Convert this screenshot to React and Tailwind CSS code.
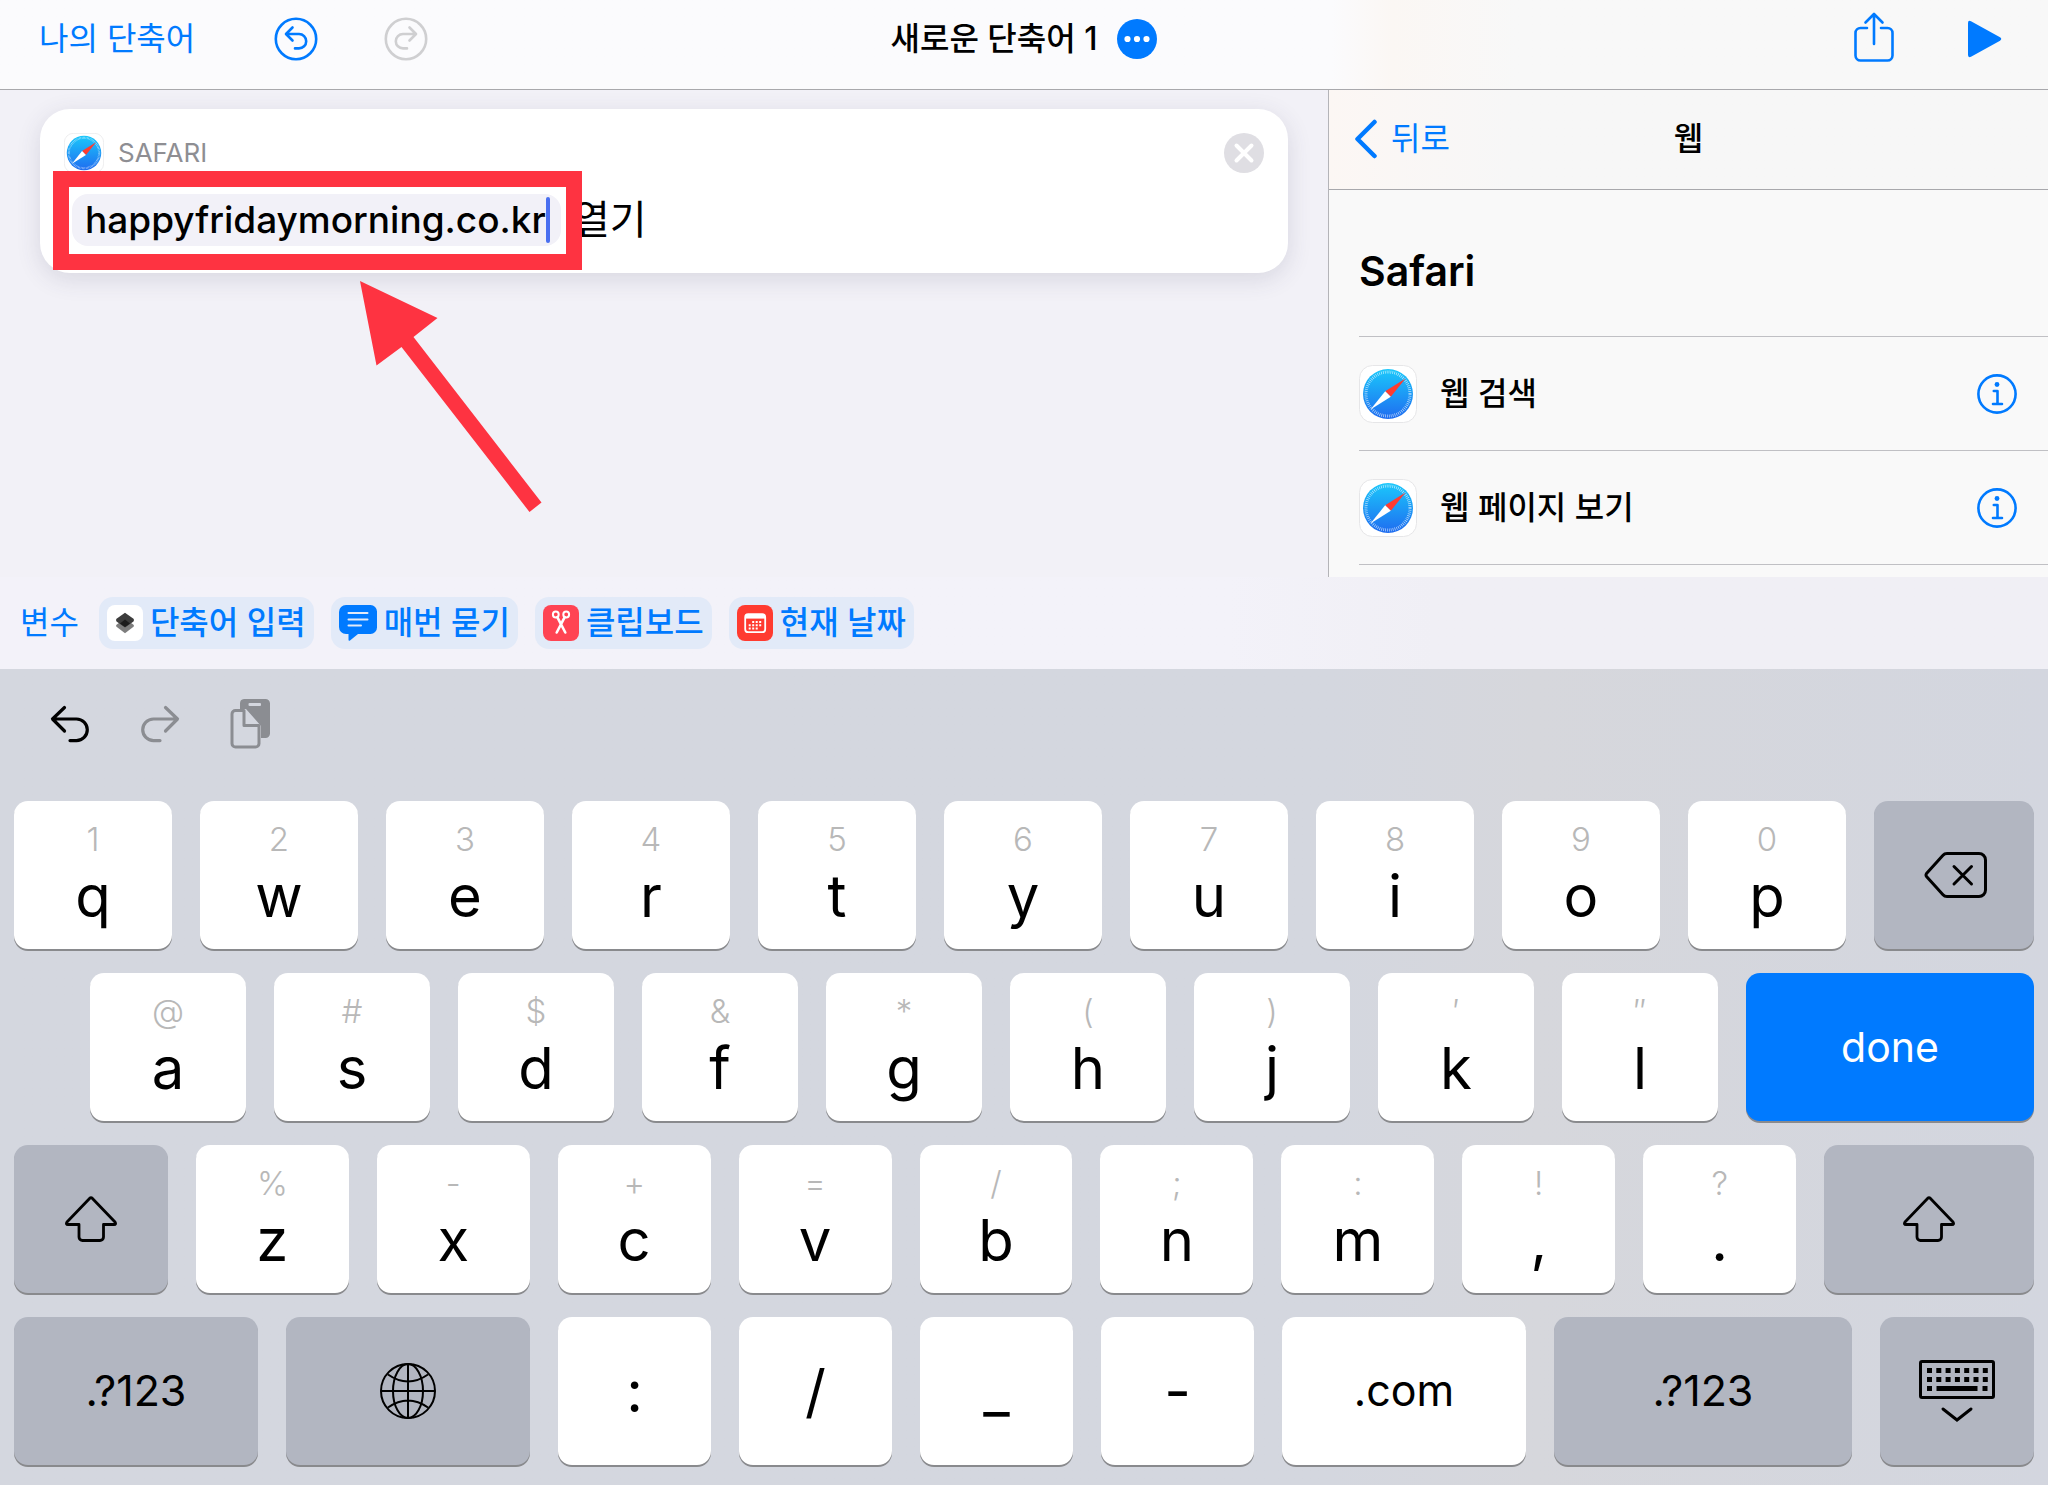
import { useId } from "react";
import { clsx } from "clsx";

const row1 = [
    ["q", "1"], ["w", "2"], ["e", "3"], ["r", "4"], ["t", "5"],
    ["y", "6"], ["u", "7"], ["i", "8"], ["o", "9"], ["p", "0"],
];
const row2 = [
    ["a", "@"], ["s", "#"], ["d", "$"], ["f", "&"], ["g", "*"],
    ["h", "("], ["j", ")"], ["k", "′"], ["l", "″"],
];
const row3 = [
    ["z", "%"], ["x", "-"], ["c", "+"], ["v", "="], ["b", "/"],
    ["n", ";"], ["m", ":"], [",", "!"], [".", "?"],
];
const row4 = [":", "/", "_", "-"];

const actions = ["웹 검색", "웹 페이지 보기"];

function SafariIcon({ className }) {
    const id = useId();
    return (
        <svg viewBox="0 0 58 58" className={className} aria-hidden="true">
            <defs>
                <linearGradient id={id} x1="0" y1="0" x2="0" y2="1">
                    <stop offset="0" stopColor="#1bc8fb" />
                    <stop offset="1" stopColor="#1f6cf0" />
                </linearGradient>
            </defs>
            <rect x="0.5" y="0.5" width="57" height="57" rx="13" fill="#fff" stroke="#e6e6e8" />
            <circle cx="29" cy="29" r="25" fill={`url(#${id})`} />
            <circle cx="29" cy="29" r="22" fill="none" stroke="#fff" strokeOpacity="0.7" strokeWidth="3" strokeDasharray="0.7 1.22" />
            <path d="M46.500 13.500 26.200 26.200l5.600 5.600z" fill="#ff3b30" />
            <path d="M11.500 44.500 26.200 26.200l5.600 5.600z" fill="#fff" />
        </svg>
    );
}

function UndoCircle({ flip }) {
    return (
        <svg viewBox="0 0 44 44" className={clsx("size-11", flip && "-scale-x-100")} fill="none" stroke="currentColor" strokeWidth="2.6" strokeLinecap="round" strokeLinejoin="round" aria-hidden="true">
            <circle cx="22" cy="22" r="20.2" />
            <path d="M18.500 10.500 12 17l6.500 6.500M12.500 17H25a7.200 7.200 0 0 1 0 14.400h-4" />
        </svg>
    );
}

function UndoArrow({ flip }) {
    return (
        <svg viewBox="0 0 40 38" className={clsx("h-[38px] w-10", flip && "-scale-x-100")} fill="none" stroke="currentColor" strokeWidth="3.2" strokeLinecap="round" strokeLinejoin="round" aria-hidden="true">
            <path d="M14.500 2.500 2.500 14l12 12M3 14h23.500a10.800 10.800 0 0 1 0 21.600H20" />
        </svg>
    );
}

function PasteIcon() {
    return (
        <svg viewBox="0 0 40 50" className="h-[50px] w-10" aria-hidden="true">
            <path d="M14 0h21.500A4.500 4.500 0 0 1 40 4.500v30a4.500 4.500 0 0 1-4.500 4.500H31V27L16 10h-6V4.500A4.500 4.500 0 0 1 14 0z" fill="#8b8d92" />
            <rect x="18.5" y="4" width="12.5" height="3" rx="1" fill="#d4d7df" />
            <path d="M5.500 11.500H14L29 27v17.500a3.500 3.500 0 0 1-3.500 3.500h-20A3.500 3.500 0 0 1 2 44.500V15a3.500 3.500 0 0 1 3.500-3.500z" fill="#d4d7df" />
            <path d="M14 11.500H5.500A3.500 3.500 0 0 0 2 15v29.500A3.500 3.500 0 0 0 5.500 48h20a3.500 3.500 0 0 0 3.500-3.500V26.500H14z" fill="none" stroke="#8b8d92" strokeWidth="3" strokeLinejoin="round" />
        </svg>
    );
}

function ShareIcon() {
    return (
        <svg viewBox="0 0 40 50" className="h-[50px] w-10" fill="none" stroke="currentColor" strokeWidth="2.6" strokeLinecap="round" strokeLinejoin="round" aria-hidden="true">
            <path d="M13 16H6.500A5 5 0 0 0 1.500 21v22.500a5 5 0 0 0 5 5h27a5 5 0 0 0 5-5V21a5 5 0 0 0-5-5H27" />
            <path d="M20 32V2.500M11.500 10.500 20 2l8.500 8.500" />
        </svg>
    );
}

function InfoIcon() {
    return (
        <svg viewBox="0 0 40 40" className="size-10" fill="none" stroke="currentColor" strokeWidth="2.6" strokeLinecap="round" strokeLinejoin="round" aria-hidden="true">
            <circle cx="20" cy="20" r="18.6" />
            <circle cx="20" cy="10.5" r="2.4" fill="currentColor" stroke="none" />
            <path d="M16.800 17h3.700v13M16 30h9" />
        </svg>
    );
}

function ShortcutsGlyph() {
    return (
        <svg viewBox="0 0 36 36" className="size-9" aria-hidden="true">
            <rect width="36" height="36" rx="8" fill="#fff" />
            <path d="M18 13.500 26.500 19.800q1 1 0 2L18 28.200l-8.500-6.400q-1-1 0-2z" fill="#7d7d7d" />
            <path d="M18 7.800 26.500 13.800q1 1 0 2.600L18 22.500l-8.500-6.100q-1-1.600 0-2.600z" fill="#3c3c3c" />
            <path d="M18 14.500 23 18.500 18 22 13 18.500z" fill="#1c1c1c" />
        </svg>
    );
}

function AskGlyph() {
    return (
        <svg viewBox="0 0 38 36" className="h-9 w-[38px]" aria-hidden="true">
            <path d="M7 0h24.500A6.500 6.500 0 0 1 38 6.500v16a6.500 6.500 0 0 1-6.500 6.500H19l-8 6.500q-1.500 1-1.500-1V29H7a7 7 0 0 1-7-7V7a7 7 0 0 1 7-7z" fill="#007aff" />
            <path d="M9.500 8h19M9.500 14.500h19M9.500 20.500H22" stroke="#e2eaf8" strokeWidth="2" strokeLinecap="round" />
        </svg>
    );
}

function ClipboardGlyph() {
    return (
        <svg viewBox="0 0 36 36" className="size-9" fill="none" stroke="#fff" aria-hidden="true">
            <rect width="36" height="36" rx="8" fill="#ff4453" stroke="none" />
            <circle cx="12.8" cy="9.5" r="2.9" strokeWidth="2" />
            <circle cx="23.2" cy="9.5" r="2.9" strokeWidth="2" />
            <path d="M14.300 12.200 22.300 27.500M21.700 12.200 13.700 27.500" strokeWidth="2.6" strokeLinecap="round" />
        </svg>
    );
}

function DateGlyph() {
    return (
        <svg viewBox="0 0 36 36" className="size-9" fill="none" stroke="#fff" aria-hidden="true">
            <rect width="36" height="36" rx="8" fill="#ff3b30" stroke="none" />
            <rect x="8.2" y="9.2" width="20" height="18" rx="3" strokeWidth="1.8" />
            <path d="M8.500 11.800h19.500" strokeWidth="3.6" />
            <path d="M15.200 17h9M11.700 20.200h12.500M11.700 23.400h9" strokeWidth="2" strokeDasharray="2 1.5" />
        </svg>
    );
}

function BackspaceIcon() {
    return (
        <svg viewBox="0 0 64 48" className="ml-1 h-12 w-16" fill="none" stroke="currentColor" strokeWidth="3" strokeLinecap="round" strokeLinejoin="round" aria-hidden="true">
            <path d="M23 2.500h32A6.500 6.500 0 0 1 61.500 9v30a6.500 6.500 0 0 1-6.500 6.500H23q-2.500 0-4-1.800L2.500 25.500q-1-1.500 0-3L19 4.300q1.500-1.800 4-1.800z" />
            <path d="M30 15.500 47.500 33M47.500 15.500 30 33" />
        </svg>
    );
}

function ShiftIcon() {
    return (
        <svg viewBox="0 0 52 46" className="h-[46px] w-[52px]" fill="none" stroke="currentColor" strokeWidth="2.8" strokeLinejoin="round" aria-hidden="true">
            <path d="M24.800 2.200q1.200-1 2.400 0L50 26q1.500 2.500-1 2.500H38.500V41a3.500 3.500 0 0 1-3.500 3.500H17.500A3.500 3.500 0 0 1 14 41V28.500H3Q.5 28.500 2 26z" />
        </svg>
    );
}

function GlobeIcon() {
    return (
        <svg viewBox="0 0 56 56" className="size-14" fill="none" stroke="currentColor" strokeWidth="2" aria-hidden="true">
            <circle cx="28" cy="28" r="27" />
            <ellipse cx="28" cy="28" rx="15" ry="27" />
            <path d="M28 1v54M1 28h54M8 11.500q20 14 40 0M8 44.500q20-14 40 0" />
        </svg>
    );
}

function HideKeyboardIcon() {
    return (
        <svg viewBox="0 0 76 62" className="h-[62px] w-[76px]" fill="none" stroke="currentColor" strokeWidth="3" aria-hidden="true">
            <rect x="1.5" y="1.5" width="73" height="36" rx="1.5" />
            <path d="M8 10.500h61M8 19.500h61" strokeWidth="5" strokeDasharray="5 4.3" />
            <path d="M8 28.500h5M17.500 28.500h41M63.500 28.500h5" strokeWidth="5" />
            <path d="M24 49 38 60 52 49" strokeLinecap="round" />
        </svg>
    );
}

function Key({ children, hint, tone = "light", label }) {
    return (
        <button
            aria-label={label}
            className={clsx(
                "flex h-[148px] min-w-0 flex-col items-center rounded-[14px] shadow-[0_2px_0_#898a8d]",
                tone === "light" && "bg-white text-black",
                tone === "dark" && "bg-[#b2b6c1] text-black",
                tone === "blue" && "bg-[#007aff] text-white",
                hint ? "gap-[7px] pt-[18px]" : "justify-center"
            )}
        >
            {hint && <span className="text-[33px] leading-10 font-light text-[#b8b8b8]">{hint}</span>}
            {children}
        </button>
    );
}

function Letter({ children }) {
    return <span className="text-[58px] leading-[60px]">{children}</span>;
}

function Word({ children }) {
    return <span className="pb-[3px] text-[43px] leading-[50px]">{children}</span>;
}

function Chip({ icon, children }) {
    return (
        <button className="flex h-[52px] items-center gap-[7px] rounded-[14px] bg-[#e2eaf8] px-2 text-[32px] leading-10 font-medium whitespace-nowrap">
            {icon}
            {children}
        </button>
    );
}

function Header() {
    return (
        <header className="grid h-[90px] grid-cols-[1fr_auto_1fr] items-center border-b border-[#a8a8ac] bg-linear-to-r from-[#fbfbfd] from-65% via-[#fbf7f4] via-68% to-[#f8f8f8] to-74% px-[39px] pb-[11px]">
            <div className="flex items-center text-[#007aff]">
                <a href="#shortcuts" className="w-[235px] text-[32px] leading-10">나의 단축어</a>
                <button aria-label="실행 취소" className="mr-[66px]"><UndoCircle /></button>
                <button aria-label="다시 실행" className="text-[#cfcfd1]"><UndoCircle flip /></button>
            </div>
            <div className="flex items-center gap-5">
                <h1 className="text-[32px] leading-10 font-medium">새로운 단축어 1</h1>
                <button aria-label="설정">
                    <svg viewBox="0 0 40 40" className="size-10" aria-hidden="true">
                        <circle cx="20" cy="20" r="20" fill="#007aff" />
                        <g fill="#fff">
                            <circle cx="10.5" cy="20" r="3.1" />
                            <circle cx="20" cy="20" r="3.1" />
                            <circle cx="29.5" cy="20" r="3.1" />
                        </g>
                    </svg>
                </button>
            </div>
            <div className="flex items-center justify-end gap-[74px] pr-[7px] text-[#007aff]">
                <button aria-label="공유" className="pb-1"><ShareIcon /></button>
                <button aria-label="실행">
                    <svg viewBox="0 0 34 38" className="h-[38px] w-[34px]" fill="currentColor" aria-hidden="true">
                        <path d="M0 3Q0 0 3 1.200L32 17.300q2.500 1.700 0 3.400L3 36.800Q0 38 0 35z" />
                    </svg>
                </button>
            </div>
        </header>
    );
}

function ActionCard() {
    return (
        <article className="relative h-[164px] rounded-[30px] bg-white pt-6 pr-6 pl-6 shadow-[0_6px_24px_rgba(60,60,90,0.14)]">
            <div className="flex h-10 items-center">
                <SafariIcon className="size-10" />
                <h2 className="ml-[14px] flex-1 text-[26px] leading-8 text-[#8e8e93]">SAFARI</h2>
                <button aria-label="동작 삭제">
                    <svg viewBox="0 0 40 40" className="size-10" aria-hidden="true">
                        <circle cx="20" cy="20" r="20" fill="#dfdee3" />
                        <path d="m12.500 12.500 15 15M27.500 12.500l-15 15" stroke="#fff" strokeWidth="4" strokeLinecap="round" />
                    </svg>
                </button>
            </div>
            <div className="mt-[21px] ml-2 flex h-[52px] items-center gap-3">
                <div className="relative h-[52px] w-[489px] rounded-2xl bg-[#f2f1f8]">
                    <input type="text" aria-label="URL" defaultValue="happyfridaymorning.co.kr" className="h-[52px] w-full bg-transparent pl-[13px] text-[37px] leading-[52px] font-medium outline-none" />
                    <span className="absolute top-[3px] right-[11px] h-[46px] w-1 rounded-full bg-[#4a6ff0]" />
                </div>
                <span className="text-[40px] leading-[54px]">열기</span>
            </div>

            {/* Highlight around the URL field */}
            <div className="pointer-events-none absolute top-[62px] left-[13px] h-[99px] w-[529px] border-16 border-[#fe3341]" />
            <svg viewBox="0 0 184 234" className="pointer-events-none absolute top-[171px] left-[319px] h-[234px] w-[184px]" aria-hidden="true">
                <path d="M1 1 78.500 38 54.500 57 182.500 222.500 170.500 232 42.500 67 17.500 85.500z" fill="#fe3341" />
            </svg>
        </article>
    );
}

function Sidebar() {
    return (
        <aside className="flex flex-col border-l border-[#b4b4b8] bg-[#f9f9f9]">
            <nav className="grid h-[100px] grid-cols-[1fr_auto_1fr] items-center border-b border-[#a8a8ac] bg-linear-to-r from-[#fcf7f4] to-[#f7f7f7] to-25% px-[25px] pb-px">
                <a href="#back" className="flex items-center gap-[13px] text-[32px] leading-10 text-[#007aff]">
                    <svg viewBox="0 0 24 40" className="h-10 w-6" fill="none" stroke="currentColor" strokeWidth="4.5" strokeLinecap="round" strokeLinejoin="round" aria-hidden="true">
                        <path d="M20.500 3 3.500 20l17 17" />
                    </svg>
                    뒤로
                </a>
                <h2 className="text-[32px] leading-10 font-medium">웹</h2>
            </nav>
            <div className="pl-[30px]">
                <h3 className="pt-14 pb-10 text-[41px] leading-[50px] font-semibold">Safari</h3>
                <ul className="border-b border-[#c0c0c4]">
                    {actions.map((name) => (
                        <li key={name} className="flex h-[114px] items-center border-t border-[#c0c0c4] pr-[31px]">
                            <SafariIcon className="size-[58px]" />
                            <span className="ml-[23px] flex-1 text-[32px] leading-10 font-medium">{name}</span>
                            <button aria-label={`${name} 정보`} className="text-[#007aff]"><InfoIcon /></button>
                        </li>
                    ))}
                </ul>
            </div>
        </aside>
    );
}

function Keyboard() {
    return (
        <section className="bg-linear-to-r from-[#d4d7df] from-65% via-[#d6d7dc] via-75% to-[#d3d6df] px-[14px] pb-5">
            <div className="flex h-[132px] items-center pb-[22px] pl-9">
                <button aria-label="실행 취소" className="mr-[50px]"><UndoArrow /></button>
                <button aria-label="다시 실행" className="mr-[50px] text-[#8b8d92]"><UndoArrow flip /></button>
                <button aria-label="붙여넣기"><PasteIcon /></button>
            </div>
            <div className="flex flex-col gap-6">
                <div className="grid grid-cols-[repeat(10,158fr)_160fr] gap-[28px]">
                    {row1.map(([k, hint]) => <Key key={k} hint={hint}><Letter>{k}</Letter></Key>)}
                    <Key tone="dark" label="지우기"><BackspaceIcon /></Key>
                </div>
                <div className="grid grid-cols-[repeat(9,156fr)_288fr] gap-[28px] pl-[76px]">
                    {row2.map(([k, hint]) => <Key key={k} hint={hint}><Letter>{k}</Letter></Key>)}
                    <Key tone="blue"><span className="text-[41px] leading-[50px]">done</span></Key>
                </div>
                <div className="grid grid-cols-[154fr_repeat(9,153fr)_210fr] gap-[28px]">
                    <Key tone="dark" label="shift"><ShiftIcon /></Key>
                    {row3.map(([k, hint]) => <Key key={k} hint={hint}><Letter>{k}</Letter></Key>)}
                    <Key tone="dark" label="shift"><ShiftIcon /></Key>
                </div>
                <div className="grid grid-cols-[244fr_244fr_repeat(4,153fr)_244fr_298fr_154fr] gap-[28px]">
                    <Key tone="dark"><Word>.?123</Word></Key>
                    <Key tone="dark" label="다음 키보드"><GlobeIcon /></Key>
                    {row4.map((k) => <Key key={k}><Letter>{k}</Letter></Key>)}
                    <Key><Word>.com</Word></Key>
                    <Key tone="dark"><Word>.?123</Word></Key>
                    <Key tone="dark" label="키보드 가리기"><HideKeyboardIcon /></Key>
                </div>
            </div>
        </section>
    );
}

export default function App() {
    return (
        <div className="flex min-h-screen flex-col bg-[#f2f1f7] font-['Inter','Noto_Sans_CJK_KR',sans-serif] text-black">
            <Header />
            <div className="grid flex-1 grid-cols-[1328fr_720fr]">
                <main className="px-10 pt-[19px]">
                    <ActionCard />
                </main>
                <Sidebar />
            </div>
            <div className="flex h-[92px] items-center gap-[17px] bg-linear-to-r from-[#f3f2f9] from-60% to-[#f0eff5] to-70% pl-5 text-[#007aff]">
                <span className="mr-[3px] text-[32px] leading-10">변수</span>
                <Chip icon={<ShortcutsGlyph />}>단축어 입력</Chip>
                <Chip icon={<AskGlyph />}>매번 묻기</Chip>
                <Chip icon={<ClipboardGlyph />}>클립보드</Chip>
                <Chip icon={<DateGlyph />}>현재 날짜</Chip>
            </div>
            <Keyboard />
        </div>
    );
}
